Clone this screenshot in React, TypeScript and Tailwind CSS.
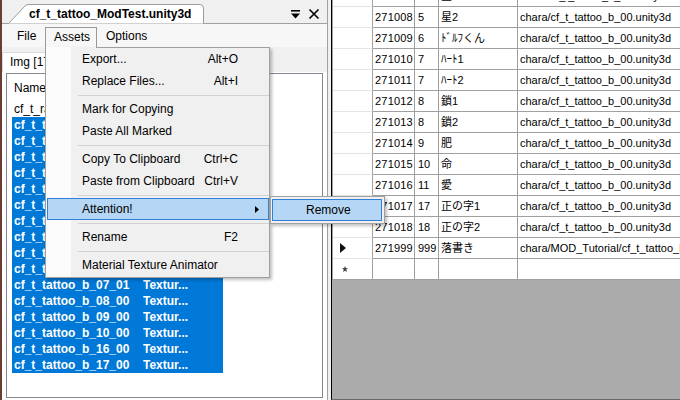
import React from "react";

const rows: [string, string, string, string][] = [
  ["271007", "4", "星1", "chara/cf_t_tattoo_b_00.unity3d"],
  ["271008", "5", "星2", "chara/cf_t_tattoo_b_00.unity3d"],
  ["271009", "6", "ﾄﾞﾙﾌくん", "chara/cf_t_tattoo_b_00.unity3d"],
  ["271010", "7", "ﾊｰﾄ1", "chara/cf_t_tattoo_b_00.unity3d"],
  ["271011", "7", "ﾊｰﾄ2", "chara/cf_t_tattoo_b_00.unity3d"],
  ["271012", "8", "鎖1", "chara/cf_t_tattoo_b_00.unity3d"],
  ["271013", "8", "鎖2", "chara/cf_t_tattoo_b_00.unity3d"],
  ["271014", "9", "肥", "chara/cf_t_tattoo_b_00.unity3d"],
  ["271015", "10", "命", "chara/cf_t_tattoo_b_00.unity3d"],
  ["271016", "11", "愛", "chara/cf_t_tattoo_b_00.unity3d"],
  ["271017", "17", "正の字1", "chara/cf_t_tattoo_b_00.unity3d"],
  ["271018", "18", "正の字2", "chara/cf_t_tattoo_b_00.unity3d"],
  ["271999", "999", "落書き", "chara/MOD_Tutorial/cf_t_tattoo_b_99.unity3d"],
];

const selected = [
  "cf_t_tattoo_b_00_00",
  "cf_t_tattoo_b_01_00",
  "cf_t_tattoo_b_02_00",
  "cf_t_tattoo_b_03_00",
  "cf_t_tattoo_b_04_00",
  "cf_t_tattoo_b_05_00",
  "cf_t_tattoo_b_06_00",
  "cf_t_tattoo_b_06_01",
  "cf_t_tattoo_b_07_00",
  "cf_t_tattoo_b_07_02",
  "cf_t_tattoo_b_07_01",
  "cf_t_tattoo_b_08_00",
  "cf_t_tattoo_b_09_00",
  "cf_t_tattoo_b_10_00",
  "cf_t_tattoo_b_16_00",
  "cf_t_tattoo_b_17_00",
];

type Item = { label: string; key?: string; sub?: boolean; hi?: boolean } | "sep";
const menu: Item[] = [
  { label: "Export...", key: "Alt+O" },
  { label: "Replace Files...", key: "Alt+I" },
  "sep",
  { label: "Mark for Copying" },
  { label: "Paste All Marked" },
  "sep",
  { label: "Copy To Clipboard", key: "Ctrl+C" },
  { label: "Paste from Clipboard", key: "Ctrl+V" },
  "sep",
  { label: "Attention!", sub: true, hi: true },
  "sep",
  { label: "Rename", key: "F2" },
  "sep",
  { label: "Material Texture Animator" },
];

export default function App() {
  return (
    <div className="relative w-[680px] h-[400px] overflow-hidden flex bg-[#f0f0f0] font-['Liberation_Sans','Noto_Sans_CJK_JP',sans-serif] text-[12px] text-black">
      {/* LEFT PANEL */}
      <div className="w-[328px] shrink-0 h-full flex flex-col border-l-2 border-l-[#6b3d33] border-r border-r-[#a0a0a0] bg-white">
        {/* title strip */}
        <div className="relative h-[24px] bg-[#f0f0f0] border-b border-[#a0a0a0] shrink-0">
          <svg className="absolute left-[6px] top-[4px]" width="196" height="20" viewBox="0 0 196 20">
            <path d="M0.5 19.5 L17 2 Q18.5 0.5 21 0.5 L192 0.5 Q195.5 0.5 195.5 4 L195.5 19.5" fill="#ffffff" stroke="#9c9c9c" />
          </svg>
          <span className="absolute left-[27px] top-[6px] font-bold text-[12px] leading-[16px]">cf_t_tattoo_ModTest.unity3d</span>
          <svg className="absolute left-[288px] top-[9px]" width="11" height="11" viewBox="0 0 11 11">
            <rect x="1" y="1" width="9" height="1.6" fill="#000" />
            <path d="M1 4.5 L10 4.5 L5.5 9.5 Z" fill="#000" />
          </svg>
          <svg className="absolute left-[306px] top-[8px]" width="12" height="12" viewBox="0 0 12 12">
            <path d="M1.5 1.5 L10.5 10.5 M10.5 1.5 L1.5 10.5" stroke="#000" strokeWidth="1.6" />
          </svg>
        </div>
        {/* menu bar */}
        <div className="h-[23px] bg-[#f7f7f7] flex items-end shrink-0 pl-[6px]">
          <div className="h-[20px] w-[37px] pl-[9px] leading-[19px]">File</div>
          <div className="h-[20px] w-[52px] pl-[8px] leading-[19px] border-l border-t border-r border-[#999999]">Assets</div>
          <div className="h-[20px] pl-[9px] leading-[19px]">Options</div>
        </div>
        {/* tab strip */}
        <div className="h-[25px] bg-[#f0f0f0] flex items-end shrink-0">
          <div className="h-[20px] w-[90px] bg-white border-t border-l border-r border-[#d9d9d9] pl-[7px] leading-[19px]">Img [17]</div>
        </div>
        {/* tab page */}
        <div className="flex-1 bg-white pl-[4px] pr-[4px] pt-[1px] pb-[2px] flex">
          <div className="flex-1 border border-[#828790] bg-white flex flex-col">
            <div className="h-[27px] pl-[7px] leading-[28px] shrink-0">Name</div>
            <div className="h-[16px] pl-[7px] leading-[16px]">cf_t_rarely_used</div>
            {selected.map((n) => (
              <div key={n} className="ml-[5px] w-[211px] h-[16px] bg-[#0078d7] text-white font-bold flex leading-[16px]">
                <span className="w-[131px] pl-[2px]">{n}</span>
                <span>Textur...</span>
              </div>
            ))}
          </div>
        </div>
      </div>
      <div className="w-[3px] shrink-0 h-full bg-[#f0f0f0]" />
      {/* RIGHT PANEL */}
      <div className="flex-1 min-w-0 h-full flex flex-col border-l border-black bg-[#ababab] text-[11px] border-b border-b-[#6a6a6a]">
        <div className="-mt-[14px] flex flex-col border-l border-[#a0a0a0]">
          {rows.map((r, i) => (
            <div key={r[0]} className="flex h-[21px] bg-white">
              <div className="w-[40px] shrink-0 h-full border-r border-r-[#a0a0a0] border-b border-b-[#e4e4e4] flex items-center pl-[7px]">
                {i === 12 && (
                  <svg width="6" height="10" viewBox="0 0 6 10">
                    <path d="M0 0 L6 5 L0 10 Z" fill="#111" />
                  </svg>
                )}
              </div>
              <div className="w-[42px] shrink-0 h-full border-r border-b border-[#a0a0a0] pl-[2px] leading-[20px] tracking-[0.2px]">{r[0]}</div>
              <div className="w-[24px] shrink-0 h-full border-r border-b border-[#a0a0a0] pl-[3px] leading-[20px]">{r[1]}</div>
              <div className="w-[79px] shrink-0 h-full border-r border-b border-[#a0a0a0] pl-[2px] leading-[20px] whitespace-nowrap overflow-hidden">{r[2]}</div>
              <div className="flex-1 min-w-0 h-full border-b border-[#a0a0a0] pl-[2px] leading-[20px] whitespace-nowrap overflow-hidden">{r[3]}</div>
            </div>
          ))}
          <div className="flex h-[21px] bg-white">
            <div className="w-[40px] shrink-0 h-full border-r border-r-[#a0a0a0] border-b border-b-[#a0a0a0] flex items-center pl-[9px]">
              <svg width="6" height="6" viewBox="0 0 6 6">
                <path d="M3 0 L3.8 2 L6 2.2 L4.3 3.6 L4.9 6 L3 4.7 L1.1 6 L1.7 3.6 L0 2.2 L2.2 2 Z" fill="#444" />
              </svg>
            </div>
            <div className="w-[42px] shrink-0 h-full border-r border-b border-[#a0a0a0]" />
            <div className="w-[24px] shrink-0 h-full border-r border-b border-[#a0a0a0]" />
            <div className="w-[79px] shrink-0 h-full border-r border-b border-[#a0a0a0]" />
            <div className="flex-1 min-w-0 h-full border-b border-[#a0a0a0]" />
          </div>
        </div>
      </div>

      {/* DROPDOWN MENU */}
      <div className="absolute left-[45px] top-[47px] w-[225px] border-l border-r border-b border-[#a0a0a0] bg-[linear-gradient(to_right,#fcfcfc_25px,#f0f0f0_25px)] shadow-[2px_2px_3px_rgba(0,0,0,0.25)] flex flex-col">
        <div className="h-px ml-[50px] bg-[#a0a0a0]" />
        {menu.map((m, i) =>
          m === "sep" ? (
            <div key={i} className="h-[6px] flex items-center pl-[32px]">
              <div className="h-px w-full bg-[#d2d2d2]" />
            </div>
          ) : (
            <div
              key={i}
              className={`relative h-[22px] flex items-center ml-px ${m.hi ? "bg-[#b5d6f4] border border-[#2f80d6]" : ""}`}
            >
              <span className={`absolute ${m.hi ? "left-[34px]" : "left-[35px]"}`}>{m.label}</span>
              {m.key && <span className="absolute right-[31px]">{m.key}</span>}
              {m.sub && (
                <svg className="absolute left-[207px] top-[7px]" width="4" height="7" viewBox="0 0 4 7">
                  <path d="M0 0 L4 3.5 L0 7 Z" fill="#000" />
                </svg>
              )}
            </div>
          )
        )}
        <div className="h-px" />
      </div>

      {/* SUBMENU */}
      <div className="absolute left-[270px] top-[196px] w-[115px] h-[28px] border border-[#a0a0a0] bg-[#f0f0f0] shadow-[2px_2px_3px_rgba(0,0,0,0.25)] p-[2px] pl-[1px]">
        <div className="h-full bg-[#b5d6f4] border border-[#2f80d6] pl-[33px] leading-[20px]">Remove</div>
      </div>
    </div>
  );
}
